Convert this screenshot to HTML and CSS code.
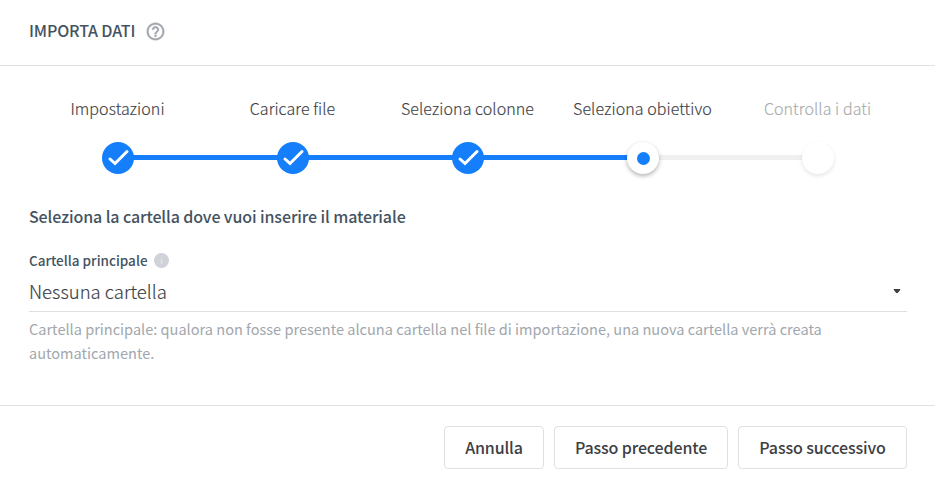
FILE: index.html
```html
<!DOCTYPE html>
<html lang="it">
<head>
<meta charset="utf-8">
<title>Importa dati</title>
<link rel="stylesheet" href="styles.css">
</head>
<body>
<div class="dialog">
  <header class="header">
    <h1 class="title">IMPORTA DATI</h1>
    <svg class="help" viewBox="0 0 24 24"><path d="M11 18h2v-2h-2v2zm1-16C6.48 2 2 6.48 2 12s4.480 10 10 10 10-4.480 10-10S17.520 2 12 2zm0 18c-4.410 0-8-3.590-8-8s3.590-8 8-8 8 3.590 8 8-3.590 8-8 8zm0-14c-2.210 0-4 1.790-4 4h2c0-1.100.9-2 2-2s2 .9 2 2c0 2-3 1.750-3 5h2c0-2.250 3-2.500 3-5 0-2.210-1.790-4-4-4z"/></svg>
  </header>
  <main class="content">
    <ol class="steps">
      <li class="step done"><span class="label">Impostazioni</span><span class="marker"><svg viewBox="0 0 32 32"><path d="M8 17l5 4.500L25 9.500"/></svg></span></li>
      <li class="step done"><span class="label">Caricare file</span><span class="marker"><svg viewBox="0 0 32 32"><path d="M8 17l5 4.500L25 9.500"/></svg></span></li>
      <li class="step done"><span class="label">Seleziona colonne</span><span class="marker"><svg viewBox="0 0 32 32"><path d="M8 17l5 4.500L25 9.500"/></svg></span></li>
      <li class="step current"><span class="label">Seleziona obiettivo</span><span class="marker"><span class="dot"></span></span></li>
      <li class="step pending"><span class="label">Controlla i dati</span><span class="marker"></span></li>
    </ol>
    <h2 class="subtitle">Seleziona la cartella dove vuoi inserire il materiale</h2>
    <div class="field-label"><span class="field-name">Cartella principale</span><svg class="info" viewBox="0 0 14 14"><circle cx="7" cy="7" r="7"/><path d="M6.300 3.500h1.400v1.400H6.300zM6.300 6h1.400v4.500H6.300z"/></svg></div>
    <div class="select"><span class="value">Nessuna cartella</span><svg class="caret" viewBox="0 0 8 4"><path d="M.8 0h6.400v1L4.700 4H3.300L.8 1z"/></svg></div>
    <p class="hint"><span class="hint-line">Cartella principale: qualora non fosse presente alcuna cartella nel file di importazione, una nuova cartella verrà creata</span> automaticamente.</p>
  </main>
  <footer class="footer">
    <button class="btn cancel">Annulla</button>
    <button class="btn prev">Passo precedente</button>
    <button class="btn next">Passo successivo</button>
  </footer>
</div>
</body>
</html>
```
FILE: styles.css
```css
* { box-sizing: border-box; }
body {
  margin: 0;
  background: #fff;
  color: #3c4043;
  font-family: "Noto Sans CJK SC", "Open Sans", sans-serif;
}
h1, h2, p, ol { margin: 0; padding: 0; }
.dialog { height: 485px; display: flex; flex-direction: column; overflow: hidden; }
.header {
  height: 66px;
  flex: none;
  padding: 0 29px 4px;
  display: flex;
  align-items: center;
  border-bottom: 1px solid #e0e1e2;
}
.title { font-size: 16px; line-height: 24px; font-weight: 500; color: #44535f; white-space: nowrap; letter-spacing: -.15px; padding-bottom: 2px; }
.help { width: 21px; height: 21px; margin: 1px 0 0 10px; fill: #a2a7ae; stroke: #a2a7ae; stroke-width: .4; }
.content { height: 340px; flex: none; padding: 30px 28px 0 29px; }
.steps { list-style: none; display: flex; width: 875px; margin-left: 1px; }
.step { width: 175px; position: relative; text-align: center; }
.label { display: block; font-size: 16px; line-height: 24px; font-weight: 300; letter-spacing: .07px; -webkit-text-stroke: .15px currentColor; white-space: nowrap; }
.marker {
  position: relative;
  z-index: 1;
  display: flex;
  align-items: center;
  justify-content: center;
  width: 32px;
  height: 32px;
  margin: 22px auto 0;
  border-radius: 50%;
  background: #fff;
}
.done .marker { background: #147efb; }
.marker svg { width: 32px; height: 32px; fill: none; stroke: #fff; stroke-width: 3; stroke-linecap: round; }
.step:not(:last-child)::after {
  content: "";
  position: absolute;
  left: 50%;
  bottom: 14px;
  width: 100%;
  height: 5px;
  background: #f0f0f0;
}
.step.done::after { background: #147efb !important; }
.current .marker { box-shadow: 0 2px 4px rgba(0, 0, 0, .3); }
.pending .marker { box-shadow: 0 2px 4px rgba(0, 0, 0, .1); }
.pending .label { color: #aaabac; }
.dot { width: 13px; height: 13px; border-radius: 50%; background: #147efb; margin: 1px 0 0 1px; }
.subtitle { margin-top: 30px; font-size: 16px; line-height: 24px; font-weight: 500; color: #44535f; white-space: nowrap; letter-spacing: -.105px; }
.field-label { display: flex; align-items: center; height: 20px; margin-top: 22px; font-size: 13.500px; font-weight: 500; color: #44535f; }
.info { width: 15px; height: 15px; margin-left: 6px; fill: #cfd2d8; }
.info path { fill: #e2e4e8; }
.select { display: flex; align-items: center; justify-content: space-between; height: 41px; margin-top: 1px; padding-right: 6px; border-bottom: 1px solid #dedfe0; font-size: 18.500px; font-weight: 300; -webkit-text-stroke: .15px currentColor; }
.caret { width: 8px; height: 4px; margin-bottom: 1px; fill: #3c4043; }
.hint { margin-top: 5px; font-size: 14.550px; line-height: 24px; color: #a1a7ad; }
.hint-line { white-space: nowrap; }
.footer { flex: 1; border-top: 1px solid #e0e1e2; margin-top: -1px; padding: 20px 28px 0; display: flex; justify-content: flex-end; gap: 10px; }
.btn { height: 43px; padding: 0 0 2px; font: inherit; font-size: 16px; font-weight: 500; line-height: 24px; letter-spacing: -.13px; color: #3c4043; background: #fff; border: 1px solid #dfe0e1; border-radius: 4px; white-space: nowrap; }
.cancel { width: 100px; }
.prev { width: 174px; }
.next { width: 169px; }
```
